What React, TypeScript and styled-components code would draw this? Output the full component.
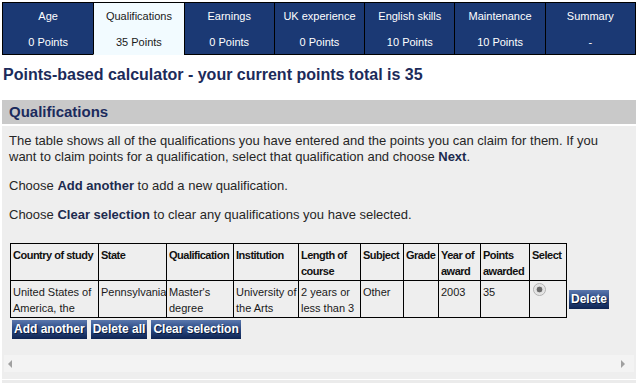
import React from "react";
import styled, { createGlobalStyle } from "styled-components";

const GlobalStyle = createGlobalStyle`
  html, body { margin: 0; padding: 0; background: #ffffff; }
  body { font-family: "Liberation Sans", Arial, sans-serif; }
  * { box-sizing: border-box; }
`;

const Page = styled.div`
  width: 638px;
  padding: 2px 2px 0 2px;
`;

const TabBar = styled.nav`
  display: grid;
  grid-template-columns: repeat(7, 1fr);
  border-top: 1px solid #000;
  border-left: 1px solid #000;
  border-right: 1px solid #000;
  width: 634px;
`;

const Tab = styled.div<{ $active?: boolean }>`
  display: flex;
  flex-direction: column;
  align-items: center;
  padding: 6px 0 5px;
  gap: 12px;
  font-size: 11px;
  line-height: 14px;
  background: ${(p) => (p.$active ? "#f2fbff" : "#1b3974")};
  color: ${(p) => (p.$active ? "#1a1a1a" : "#ffffff")};
  border-bottom: 1px solid ${(p) => (p.$active ? "#f2fbff" : "#000")};
  & + & {
    border-left: 1px solid #000;
  }
`;

const Heading = styled.h1`
  margin: 10px 0 15px 1px;
  font-size: 16px;
  line-height: 20px;
  font-weight: bold;
  color: #1c2b5a;
`;

const SectionBar = styled.h2`
  margin: 0;
  height: 24px;
  padding-left: 7px;
  background: #c9c9c9;
  font-size: 15px;
  line-height: 24px;
  font-weight: bold;
  color: #1b2b5d;
  width: 634px;
`;

const Panel = styled.section`
  margin-top: 2px;
  background: #eeeeee;
  padding-bottom: 7px;
  width: 634px;
`;

const Content = styled.div`
  padding: 7px 8px 0 7px;
`;

const Para = styled.p`
  margin: 0 0 13px;
  font-size: 13px;
  line-height: 16px;
  color: #262626;
  b {
    color: #1c2b4f;
  }
`;

const Table = styled.table`
  margin: 20px 0 0 1px;
  width: 610px;
  border-collapse: collapse;
  table-layout: fixed;
  font-size: 11px;
  line-height: 16px;
  color: #1a1a1a;
`;

const Th = styled.th<{ $w: number }>`
  width: ${(p) => p.$w}px;
  border: 1px solid #000;
  padding: 3px 1px 1px 2px;
  text-align: left;
  vertical-align: top;
  font-weight: bold;
  letter-spacing: -0.5px;
  color: #111111;
  height: 37px;
`;

const Td = styled.td`
  border: 1px solid #000;
  padding: 3px 1px 1px 2px;
  vertical-align: top;
  height: 37px;
`;

const BareCell = styled.td`
  width: 54px;
  border: none;
  padding: 0 0 0 2px;
  vertical-align: middle;
`;

const Radio = styled.input`
  appearance: none;
  -webkit-appearance: none;
  display: block;
  width: 13px;
  height: 13px;
  margin: -1px 0 0 1px;
  border: 1px solid #b2b2b2;
  border-radius: 50%;
  background: radial-gradient(circle, #6a6a6a 0 2.6px, #dedede 3.2px, #ececec 6px);
`;

const Button = styled.button`
  height: 19px;
  padding: 0 2px;
  border: none;
  font-family: "Liberation Sans", Arial, sans-serif;
  font-size: 12px;
  font-weight: bold;
  line-height: 19px;
  color: #ffffff;
  text-shadow: 1px 1px 0 #0a1a3a;
  background: linear-gradient(#5a77ad, #2e4c86 45%, #0e2452);
  cursor: pointer;
`;

const ButtonRow = styled.div`
  display: flex;
  gap: 4px;
  margin: 2px 0 0 3px;
`;

const ScrollTrack = styled.div`
  margin: 16px 2px 0 2px;
  height: 17px;
  background: #f3f3f3;
  display: flex;
  align-items: center;
  justify-content: space-between;
  padding: 0 9px 0 4px;
`;

const Arrow = styled.span<{ $dir: "left" | "right" }>`
  width: 0;
  height: 0;
  border-top: 4px solid transparent;
  border-bottom: 4px solid transparent;
  ${(p) =>
    p.$dir === "left"
      ? "border-right: 4px solid #a0a0a0;"
      : "border-left: 4px solid #a0a0a0;"}
`;

const Footer = styled.div`
  margin-top: 1px;
  height: 10px;
  background: #ebebeb;
  width: 634px;
`;

const tabs = [
  { label: "Age", pts: "0 Points" },
  { label: "Qualifications", pts: "35 Points", active: true },
  { label: "Earnings", pts: "0 Points" },
  { label: "UK experience", pts: "0 Points" },
  { label: "English skills", pts: "10 Points" },
  { label: "Maintenance", pts: "10 Points" },
  { label: "Summary", pts: "-" },
];

const cols: [string, number][] = [
  ["Country of study", 88],
  ["State", 68],
  ["Qualification", 67],
  ["Institution", 65],
  ["Length of course", 62],
  ["Subject", 43],
  ["Grade", 35],
  ["Year of award", 42],
  ["Points awarded", 49],
  ["Select", 37],
];

export default function App() {
  return (
    <Page>
      <GlobalStyle />
      <TabBar>
        {tabs.map((t) => (
          <Tab key={t.label} $active={t.active}>
            <span>{t.label}</span>
            <span>{t.pts}</span>
          </Tab>
        ))}
      </TabBar>
      <Heading>Points-based calculator - your current points total is 35</Heading>
      <SectionBar>Qualifications</SectionBar>
      <Panel>
        <Content>
          <Para>
            The table shows all of the qualifications you have entered and the points you can
            claim for them. If you want to claim points for a qualification, select that
            qualification and choose <b>Next</b>.
          </Para>
          <Para>
            Choose <b>Add another</b> to add a new qualification.
          </Para>
          <Para>
            Choose <b>Clear selection</b> to clear any qualifications you have selected.
          </Para>
          <Table>
            <thead>
              <tr>
                {cols.map(([c, w]) => (
                  <Th key={c} $w={w}>
                    {c}
                  </Th>
                ))}
                <BareCell as="th" />
              </tr>
            </thead>
            <tbody>
              <tr>
                <Td>United States of America, the</Td>
                <Td>Pennsylvania</Td>
                <Td>Master's degree</Td>
                <Td>University of the Arts</Td>
                <Td>2 years or less than 3</Td>
                <Td>Other</Td>
                <Td></Td>
                <Td>2003</Td>
                <Td>35</Td>
                <Td>
                  <Radio type="radio" name="sel" defaultChecked aria-label="Select" />
                </Td>
                <BareCell>
                  <Button>Delete</Button>
                </BareCell>
              </tr>
            </tbody>
          </Table>
          <ButtonRow>
            <Button>Add another</Button>
            <Button>Delete all</Button>
            <Button>Clear selection</Button>
          </ButtonRow>
        </Content>
        <ScrollTrack>
          <Arrow $dir="left" />
          <Arrow $dir="right" />
        </ScrollTrack>
      </Panel>
      <Footer />
    </Page>
  );
}
